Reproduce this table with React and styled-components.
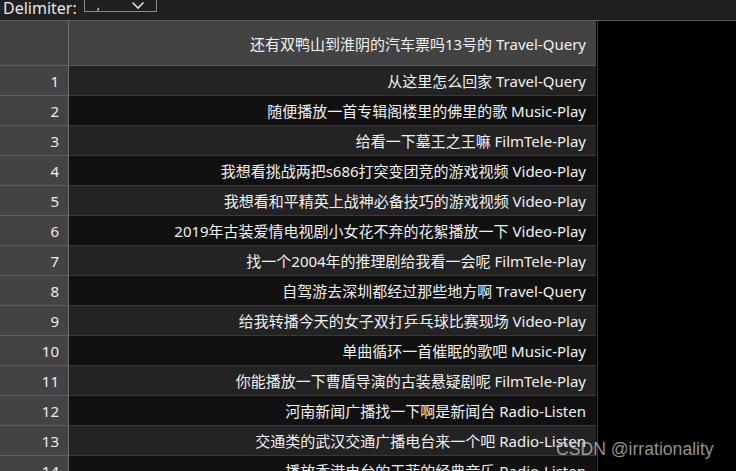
import React from 'react';
import styled, { createGlobalStyle } from 'styled-components';

const rows = [
  '从这里怎么回家 Travel-Query',
  '随便播放一首专辑阁楼里的佛里的歌 Music-Play',
  '给看一下墓王之王嘛 FilmTele-Play',
  '我想看挑战两把s686打突变团竞的游戏视频 Video-Play',
  '我想看和平精英上战神必备技巧的游戏视频 Video-Play',
  '2019年古装爱情电视剧小女花不弃的花絮播放一下 Video-Play',
  '找一个2004年的推理剧给我看一会呢 FilmTele-Play',
  '自驾游去深圳都经过那些地方啊 Travel-Query',
  '给我转播今天的女子双打乒乓球比赛现场 Video-Play',
  '单曲循环一首催眠的歌吧 Music-Play',
  '你能播放一下曹盾导演的古装悬疑剧呢 FilmTele-Play',
  '河南新闻广播找一下啊是新闻台 Radio-Listen',
  '交通类的武汉交通广播电台来一个吧 Radio-Listen',
  '播放香港电台的王菲的经典音乐 Radio-Listen',
];

const GlobalStyle = createGlobalStyle`
  html, body {
    margin: 0;
    padding: 0;
    background: #000;
    overflow: hidden;
  }
  body {
    font-family: "Noto Sans", "Noto Sans CJK SC", sans-serif;
    color: #f0f0f0;
  }
`

const Page = styled.div`
  width: 736px;
  height: 471px;
  position: relative;
  overflow: hidden;
  background: #000;
`

const Toolbar = styled.div`
  height: 21px;
  background: #202020;
  border-bottom: 1px solid #5c5c5c;
  display: flex;
  align-items: flex-end;
  overflow: hidden;
  box-sizing: border-box;
  padding-left: 3px;
`

const Label = styled.span`
  font-size: 16px;
  line-height: 18px;
  color: #e6e6e6;
  margin-bottom: 3px;
`

const Select = styled.div`
  width: 73px;
  height: 20px;
  margin-left: 7px;
  margin-bottom: 8px;
  border: 1px solid #8a8a8a;
  box-sizing: border-box;
  display: flex;
  align-items: flex-end;
  justify-content: space-between;
  padding: 0 11px 0 12px;
  font-size: 12px;
  color: #ddd;
`

const Comma = styled.span`
  line-height: 12px;
`

const Chevron = styled.svg`
  margin-bottom: 1px;
`

const Table = styled.div`
  width: 597px;
  display: grid;
  grid-template-columns: 69px 527px;
  border-right: 1px solid #3a3a3a;
`

const IndexCell = styled.div`
  box-sizing: border-box;
  background: #434343;
  border-right: 1px solid #6e6e6e;
  border-bottom: 1px solid #5e5e5e;
  height: ${p => p.$h}px;
  display: flex;
  align-items: center;
  justify-content: flex-end;
  padding-right: 9px;
  font-size: 15px;
  color: #ececec;
`

const DataCell = styled.div`
  box-sizing: border-box;
  background: ${p => p.$header ? '#434343' : p.$odd ? '#232323' : '#111111'};
  border-bottom: 1px solid ${p => p.$header ? '#5e5e5e' : '#383838'};
  height: ${p => p.$h}px;
  display: flex;
  align-items: center;
  justify-content: flex-end;
  padding-right: 10px;
  font-size: 15px;
  color: #f0f0f0;
  white-space: nowrap;
`

const Watermark = styled.div`
  position: absolute;
  left: 556px;
  top: 439px;
  font-family: "Liberation Sans", "Noto Sans", sans-serif;
  font-size: 17.6px;
  color: rgba(205, 205, 205, 0.72);
`

export default function App() {
  return (
    <Page>
      <GlobalStyle />
      <Toolbar>
        <Label>Delimiter:</Label>
        <Select>
          <Comma>,</Comma>
          <Chevron width="14" height="9" viewBox="0 0 14 9">
            <path d="M1.5 1.5 L7 7 L12.5 1.5" fill="none" stroke="#e0e0e0" strokeWidth="1.6" />
          </Chevron>
        </Select>
      </Toolbar>
      <Table>
        <IndexCell $h={45} />
        <DataCell $h={45} $header>还有双鸭山到淮阴的汽车票吗13号的 Travel-Query</DataCell>
        {rows.map((text, i) => (
          <React.Fragment key={i}>
            <IndexCell $h={30}>{i + 1}</IndexCell>
            <DataCell $h={30} $odd={i % 2 === 0}>{text}</DataCell>
          </React.Fragment>
        ))}
      </Table>
      <Watermark>CSDN @irrationality</Watermark>
    </Page>
  );
}
